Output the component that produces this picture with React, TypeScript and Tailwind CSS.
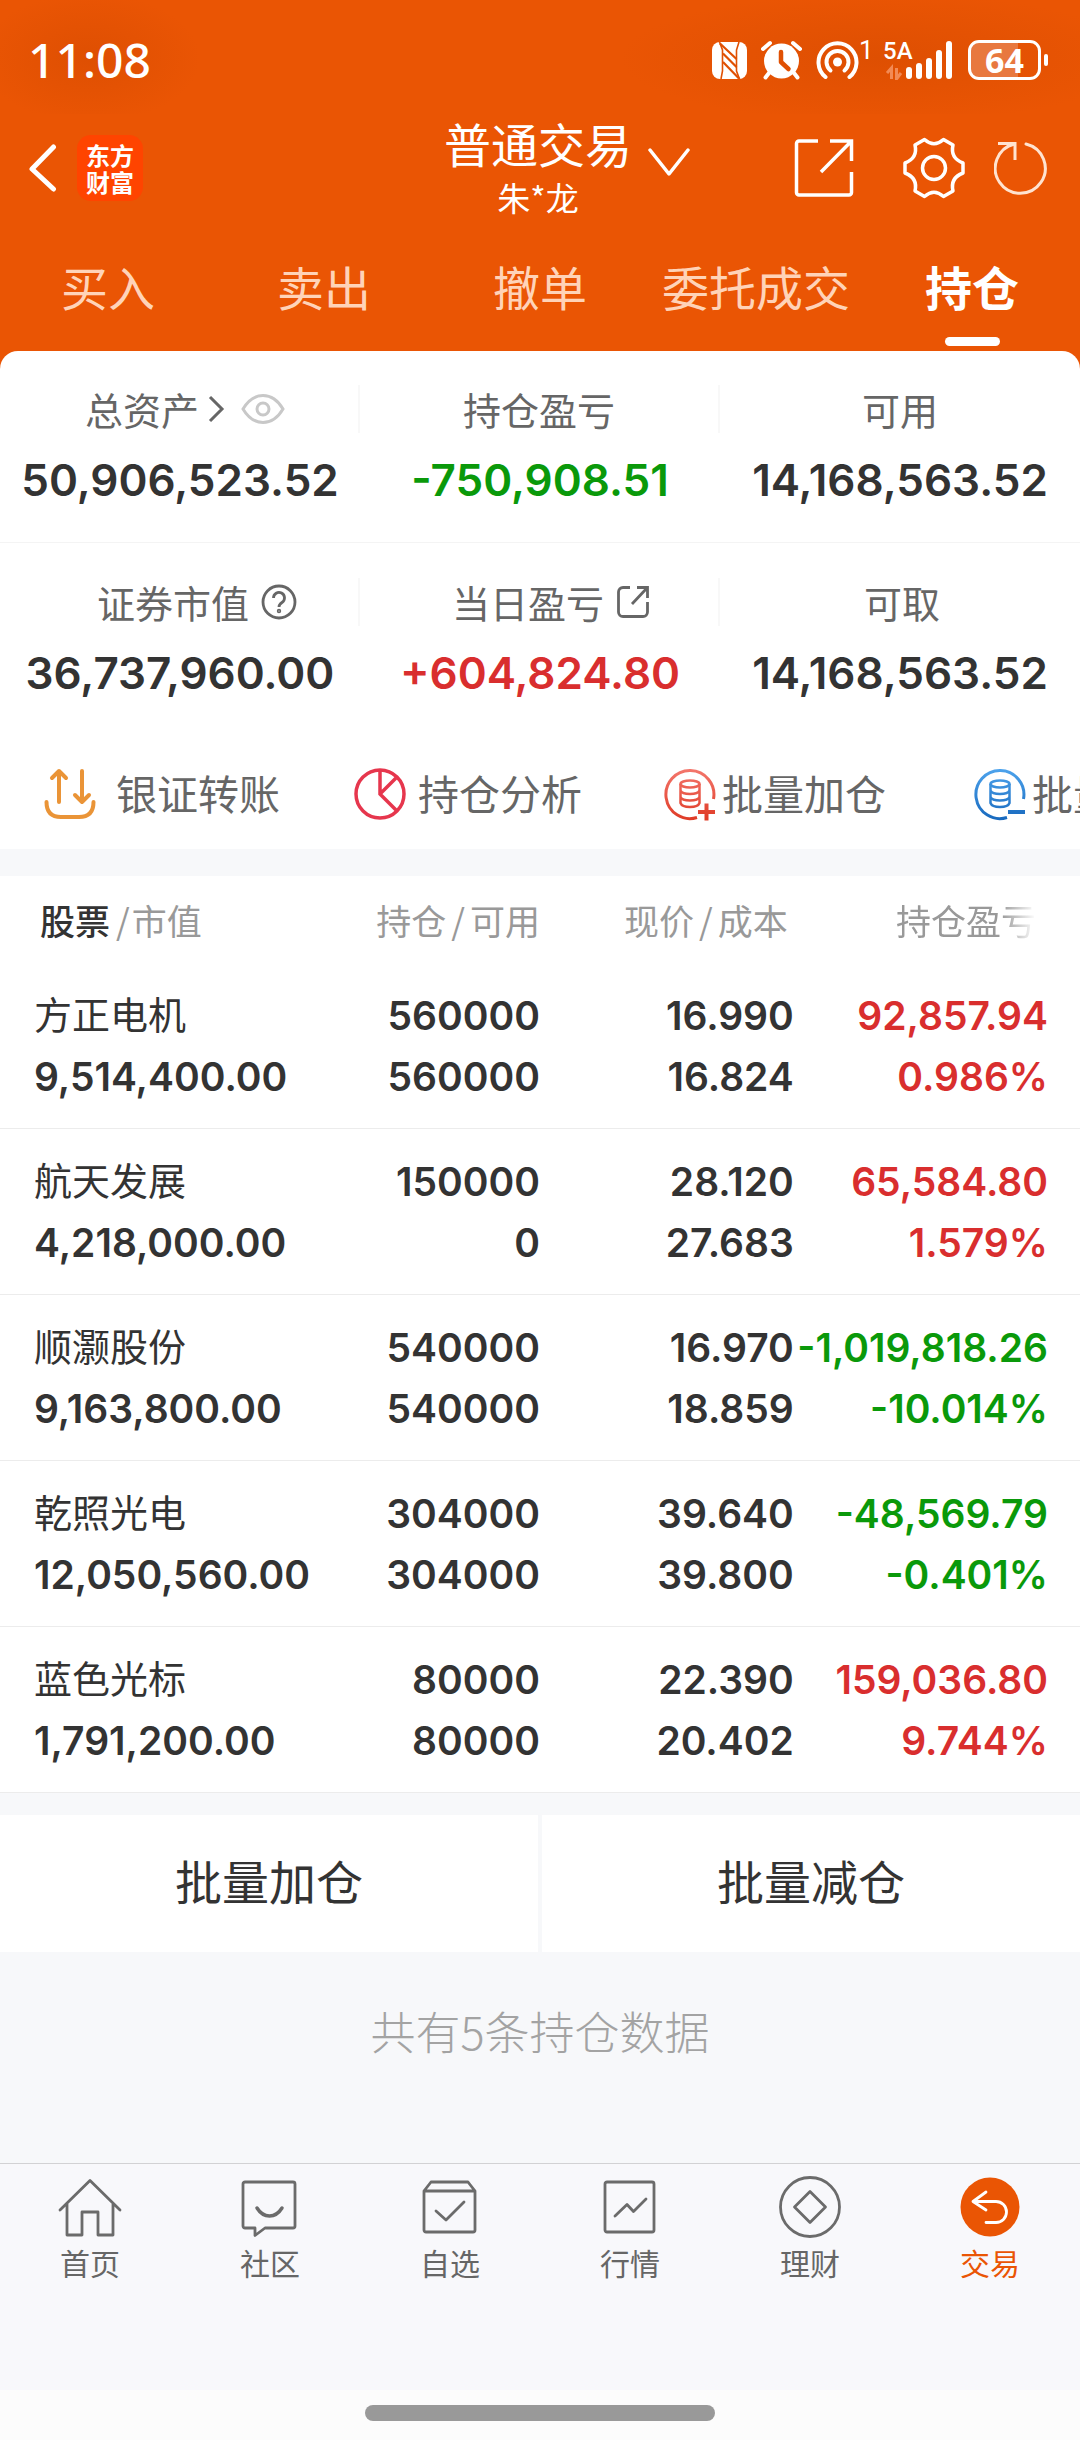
import type { ReactNode } from "react";

const RED = "text-[#d92e2e]";
const GREEN = "text-[#0a990a]";

function NfcIcon() {
  return (
    <svg width="35" height="37" viewBox="0 0 35 37" aria-hidden="true">
      <rect width="35" height="37" rx="8" fill="#fff" />
      <g fill="none" stroke="#e05003" strokeWidth="1.600">
        <path d="M7.500 0L10.500 8V29L9 37" />
        <path d="M27 0L24.500 8V29L27.500 37" />
        <path d="M8 1.500L24.500 17M11 11.500L24.500 25M11 20L27 36.500" strokeWidth="2.200" />
      </g>
    </svg>
  );
}

function AlarmIcon() {
  return (
    <svg width="41" height="40" viewBox="0 0 41 40" aria-hidden="true">
      <circle cx="20.500" cy="21" r="17.500" fill="#fff" />
      <path d="M2 9L9 3M39 9L32 3M8 33L4.500 37.500M33 33L36.500 37.500" stroke="#fff" strokeWidth="4" strokeLinecap="round" />
      <path d="M20 12V22L27.500 29" fill="none" stroke="#e05003" strokeWidth="4.500" strokeLinecap="round" strokeLinejoin="round" />
    </svg>
  );
}

function HotspotIcon() {
  return (
    <svg width="43" height="40" viewBox="0 0 43 40" aria-hidden="true">
      <circle cx="21.500" cy="22" r="4.500" fill="#fff" />
      <g fill="none" stroke="#fff" strokeWidth="4" strokeLinecap="round">
        <path d="M9.500 37A19 19 0 1 1 33.500 37" />
        <path d="M14.500 30.500A11 11 0 1 1 28.500 30.500" />
      </g>
    </svg>
  );
}

function SignalIcon() {
  return (
    <svg width="70" height="40" viewBox="0 0 70 40" aria-hidden="true">
      <path d="M2 33L6.500 28V39M11.500 28V39L16 33" fill="none" stroke="#f28a55" strokeWidth="3" />
      <g fill="#fff">
        <rect x="21" y="27" width="6" height="12" rx="3" />
        <rect x="31" y="23" width="6" height="16" rx="3" />
        <rect x="41" y="18" width="6" height="21" rx="3" />
        <rect x="51" y="10" width="6" height="29" rx="3" />
        <rect x="61" y="1" width="6" height="38" rx="3" />
      </g>
    </svg>
  );
}

function StatusBar() {
  return (
    <div className="flex h-[114px] items-start justify-between bg-[radial-gradient(ellipse_110px_65px_at_90px_58px,#de4f02,transparent),radial-gradient(ellipse_260px_65px_at_880px_58px,#de4f02,transparent)] pr-8 pl-[28px] pt-[35px] text-white">
      <span className="font-['Noto_Sans',sans-serif] text-[48px] leading-[50px] font-medium">11:08</span>
      <div className="flex h-[50px] items-center">
        <NfcIcon />
        <span className="ml-[14px]"><AlarmIcon /></span>
        <span className="ml-[14px]"><HotspotIcon /></span>
        <span className="mb-5 w-[26px] font-['Roboto',sans-serif] text-[26px] leading-[26px]">1</span>
        <span className="relative">
          <SignalIcon />
          <span className="absolute -top-[2px] -left-[2px] font-['Roboto',sans-serif] text-[24px] leading-[26px] font-medium">5A</span>
        </span>
        <span className="ml-[13px] flex h-10 w-[73px] items-center justify-center rounded-[11px] border-[3px] border-white bg-linear-to-r from-[#e8783f] from-70% to-transparent to-70% font-['Open_Sans',sans-serif] text-[34px] leading-[34px] font-bold">
          64
        </span>
        <span className="ml-[3px] h-3 w-[4px] rounded-full bg-white" />
      </div>
    </div>
  );
}

function TitleBar() {
  return (
    <div className="grid h-[108px] grid-cols-[1fr_auto_1fr] items-center pr-8 pl-7 text-white">
      <div className="flex items-center gap-5">
        <button type="button" aria-label="返回">
          <svg width="29" height="50" viewBox="0 0 29 50" fill="none" stroke="#fff" strokeWidth="5" strokeLinecap="round" strokeLinejoin="round">
            <path d="M25.500 4L4 26L25.500 46" />
          </svg>
        </button>
        <div className="flex h-[66px] w-[66px] items-center justify-center rounded-[14px] bg-[#ff4400]">
          <span className="w-[50px] text-center text-[24px] leading-[27px] font-bold break-all">东方财富</span>
        </div>
      </div>
      <button type="button" className="flex items-center gap-4 pl-[58px]">
        <span className="flex flex-col items-center">
          <span className="text-[47px] leading-[58px]">普通交易</span>
          <span className="text-[33px] leading-[50px]">朱*龙</span>
        </span>
        <svg className="mb-3" width="42" height="30" viewBox="0 0 42 30" fill="none" stroke="#fff" strokeWidth="3.500" strokeLinecap="round" strokeLinejoin="round">
          <path d="M2 3L21 27L40 3" />
        </svg>
      </button>
      <div className="flex items-center justify-end">
        <button type="button" aria-label="分享" className="mr-[49px]">
          <svg width="60" height="60" viewBox="0 0 60 60" fill="none" stroke="#fff" strokeWidth="3.500" strokeLinejoin="round">
            <path d="M24 3H5a2.500 2.500 0 0 0-2.500 2.500v49A2.500 2.500 0 0 0 5 57h50a2.500 2.500 0 0 0 2.500-2.500V34" />
            <path d="M36 3H57.500V23M57 3.500L27 34" strokeLinejoin="miter" />
          </svg>
        </button>
        <button type="button" aria-label="设置" className="mr-[29px]">
          <svg width="62" height="62" viewBox="0 0 62 62" fill="none" stroke="#fff" strokeWidth="3.500" strokeLinejoin="round">
            <path d="M40.500 2.500L50 8Q47 21 60 26V36Q47 41 50 54L40.500 59.500Q31 51 21.500 59.500L12 54Q15 41 2 36V26Q15 21 12 8L21.500 2.500Q31 11 40.500 2.500Z" />
            <circle cx="31" cy="31" r="11.500" />
          </svg>
        </button>
        <button type="button" aria-label="刷新">
          <svg width="54" height="56" viewBox="0 0 54 56" fill="none" stroke="#ffe3d0" strokeWidth="3">
            <path d="M32 4A25 25 0 1 1 20.500 4" strokeLinecap="round" />
            <path d="M4 3.500H21V20" />
          </svg>
        </button>
      </div>
    </div>
  );
}

const tabs = ["买入", "卖出", "撤单", "委托成交", "持仓"];

function Tabs() {
  return (
    <nav className="grid h-[129px] grid-cols-5 pt-8">
      {tabs.map((tab) => {
        const active = tab === "持仓";
        return (
          <button
            key={tab}
            type="button"
            className={`flex flex-col items-center justify-start text-[47px] leading-[64px] ${active ? "font-bold text-white" : "text-[#ffd3b8]"}`}
          >
            {tab}
            {active && <span className="mt-[19px] h-[9px] w-[55px] rounded-full bg-white" />}
          </button>
        );
      })}
    </nav>
  );
}

type StatProps = { label: string; value: string; tone?: string; divided?: boolean; shift?: string; icon?: ReactNode };

function Stat({ label, value, tone = "text-[#333]", divided = false, shift = "", icon }: StatProps) {
  return (
    <div className="flex flex-col items-center">
      <div className={`flex h-12 w-full items-center justify-center text-[38px] leading-[48px] text-[#666] ${shift} ${divided ? "border-r-2 border-[#f8f8f8]" : ""}`}>
        {label}
        {icon}
      </div>
      <div className={`mt-[18px] font-['Inter',sans-serif] text-[44px] leading-[58px] font-semibold whitespace-nowrap ${tone}`}>{value}</div>
    </div>
  );
}

function Summary() {
  return (
    <section>
      <div className="grid grid-cols-3 border-b border-[#f4f4f4] pt-[34px] pb-[33px]">
        <Stat
          label="总资产"
          value="50,906,523.52"
          divided
          shift="pl-3"
          icon={
            <>
              <svg className="ml-2" width="18" height="30" viewBox="0 0 18 30" fill="none" stroke="#666" strokeWidth="3">
                <path d="M3 3L15 15L3 27" />
              </svg>
              <svg className="ml-4" width="44" height="32" viewBox="0 0 44 32" fill="none" stroke="#c8c8c8" strokeWidth="3">
                <path d="M2 16Q10 2.500 22 2.500T42 16Q34 29.500 22 29.500T2 16Z" />
                <circle cx="22" cy="16" r="6" />
              </svg>
            </>
          }
        />
        <Stat label="持仓盈亏" value="-750,908.51" tone={GREEN} divided />
        <Stat label="可用" value="14,168,563.52" />
      </div>
      <div className="grid grid-cols-3 pt-[35px] pb-9">
        <Stat
          label="证券市值"
          value="36,737,960.00"
          divided
          shift="pl-9"
          icon={
            <svg className="ml-3" width="36" height="36" viewBox="0 0 36 36" fill="none" stroke="#666" strokeWidth="2.800">
              <circle cx="18" cy="18" r="16" />
              <path d="M12.500 14a5.500 5.500 0 1 1 8.500 4.500q-3 2-3 4.500" />
              <circle cx="18" cy="27" r="0.800" />
            </svg>
          }
        />
        <Stat
          label="当日盈亏"
          value="+604,824.80"
          tone={RED}
          divided
          shift="pl-6"
          icon={
            <svg className="ml-3" width="34" height="34" viewBox="0 0 34 34" fill="none" stroke="#666" strokeWidth="2.800">
              <path d="M14 2.500H7A4.500 4.500 0 0 0 2.500 7V27A4.500 4.500 0 0 0 7 31.500H27A4.500 4.500 0 0 0 31.500 27V17" />
              <path d="M21 2.500H31.500V13M31 3L16 19" />
            </svg>
          }
        />
        <Stat label="可取" value="14,168,563.52" shift="pl-1" />
      </div>
    </section>
  );
}

function CoinCircle({ top, bottom, id, minus = false }: { top: string; bottom: string; id: string; minus?: boolean }) {
  return (
    <svg width="52" height="54" viewBox="0 0 52 54" fill="none" stroke={`url(#${id})`} strokeWidth="3">
      <defs>
        <linearGradient id={id} gradientUnits="userSpaceOnUse" x1="0" y1="0" x2="0" y2="54">
          <stop stopColor={top} />
          <stop offset="1" stopColor={bottom} />
        </linearGradient>
      </defs>
      <path d="M33 50.500A24 24 0 1 1 49.500 32" />
      <ellipse cx="26" cy="17" rx="9.500" ry="3.500" strokeWidth="2.500" />
      <path d="M16.500 17V36Q18 40 26 40T35.500 36V17M16.500 23.500Q18 27 26 27T35.500 23.500M16.500 30Q18 33.500 26 33.500T35.500 30" strokeWidth="2.500" />
      <path d={minus ? "M34 45H51" : "M34 45H51M42.500 36.500V53.500"} strokeWidth="4" />
    </svg>
  );
}

function Action({ label, gap, children }: { label: string; gap: string; children: ReactNode }) {
  return (
    <button type="button" className={`flex w-[310px] shrink-0 items-center text-[41px] leading-[56px] whitespace-nowrap text-[#666] ${gap}`}>
      {children}
      <span className="mb-1">{label}</span>
    </button>
  );
}

function Actions() {
  return (
    <div className="flex h-[111px] items-center overflow-hidden pl-11">
      <Action label="银证转账" gap="gap-5">
        <svg width="52" height="54" viewBox="0 0 52 54" fill="none" stroke="#ea9437" strokeWidth="4" strokeLinecap="round" strokeLinejoin="round">
          <path d="M15 35V4M8 11L15 4L22 11M38 4V35M31 28L38 35L45 28" />
          <path d="M2.500 35Q2.500 50 17 50H35Q49.500 50 49.500 35" />
        </svg>
      </Action>
      <Action label="持仓分析" gap="gap-3">
        <svg width="52" height="54" viewBox="0 0 52 54" fill="none" stroke="#e6364d" strokeWidth="3.500">
          <circle cx="26" cy="27" r="24" />
          <path d="M26 3V27L43 44M26 27L42 11" />
        </svg>
      </Action>
      <Action label="批量加仓" gap="gap-[6px]">
        <CoinCircle id="coinRed" top="#f4796f" bottom="#df3a25" />
      </Action>
      <Action label="批量减仓" gap="gap-[6px]">
        <CoinCircle id="coinBlue" top="#4fa5ee" bottom="#1768bd" minus />
      </Action>
    </div>
  );
}

const holdings = [
  { name: "方正电机", value: "9,514,400.00", held: "560000", free: "560000", price: "16.990", cost: "16.824", pnl: "92,857.94", rate: "0.986%", tone: RED },
  { name: "航天发展", value: "4,218,000.00", held: "150000", free: "0", price: "28.120", cost: "27.683", pnl: "65,584.80", rate: "1.579%", tone: RED },
  { name: "顺灏股份", value: "9,163,800.00", held: "540000", free: "540000", price: "16.970", cost: "18.859", pnl: "-1,019,818.26", rate: "-10.014%", tone: GREEN },
  { name: "乾照光电", value: "12,050,560.00", held: "304000", free: "304000", price: "39.640", cost: "39.800", pnl: "-48,569.79", rate: "-0.401%", tone: GREEN },
  { name: "蓝色光标", value: "1,791,200.00", held: "80000", free: "80000", price: "22.390", cost: "20.402", pnl: "159,036.80", rate: "9.744%", tone: RED },
];

function Cell({ top, bottom }: { top: string; bottom: string }) {
  return (
    <td className="pt-[22px] pb-[21px] text-right">
      <div>{top}</div>
      <div>{bottom}</div>
    </td>
  );
}

function Holdings() {
  return (
    <table className="w-full table-fixed border-collapse bg-white whitespace-nowrap">
      <colgroup>
        <col className="w-[32%]" />
        <col className="w-[18%]" />
        <col className="w-[23.500%]" />
        <col className="w-[26.500%]" />
      </colgroup>
      <thead>
        <tr className="h-[87px] text-[35px] leading-[48px] text-[#999]">
          <th className="pl-10 text-left font-normal">
            <span className="mr-[6px] font-medium text-[#333]">股票</span>/<span className="ml-[2px]">市值</span>
          </th>
          <th className="text-right font-normal">持仓<span className="mx-[5px]">/</span>可用</th>
          <th className="pr-[6px] text-right font-normal">现价<span className="mx-[5px]">/</span>成本</th>
          <th className="pr-11 text-right font-normal">
            <span className="mask-r-from-75% mask-r-to-100%">持仓盈亏</span>
          </th>
        </tr>
      </thead>
      <tbody className="font-['Inter','Noto_Sans_CJK_SC',sans-serif] text-[39px] leading-[61px] font-semibold text-[#333]">
        {holdings.map((h) => (
          <tr key={h.name} className="border-b border-[#ececec]">
            <td className="pt-[22px] pb-[21px] pl-[34px]">
              <div className="h-[61px] text-[38px] font-normal">{h.name}</div>
              <div>{h.value}</div>
            </td>
            <Cell top={h.held} bottom={h.free} />
            <Cell top={h.price} bottom={h.cost} />
            <td className={`pt-[22px] pr-8 pb-[21px] text-right ${h.tone}`}>
              <div>{h.pnl}</div>
              <div>{h.rate}</div>
            </td>
          </tr>
        ))}
      </tbody>
    </table>
  );
}

const navIcons: { label: string; icon: ReactNode }[] = [
  {
    label: "首页",
    icon: <path d="M2 34L32 4.500L62 34M9 28V59H24V36H40V59H55V28" />,
  },
  {
    label: "社区",
    icon: (
      <>
        <path d="M7 6H55a2 2 0 0 1 2 2V50a2 2 0 0 1-2 2H27L17 59.500V52H7a2 2 0 0 1-2-2V8a2 2 0 0 1 2-2Z" />
        <path d="M19 32Q24 40 31.500 40T44 32" strokeWidth="3.500" />
      </>
    ),
  },
  {
    label: "自选",
    icon: (
      <>
        <path d="M6 15L13 6H50L57 15V54a2 2 0 0 1-2 2H8a2 2 0 0 1-2-2ZM6 15H57" />
        <path d="M18 35L28 44L46 26" />
      </>
    ),
  },
  {
    label: "行情",
    icon: (
      <>
        <rect x="7" y="6" width="49" height="50" rx="2" />
        <path d="M17 40L29 28.500L35.500 35.500L48 23" />
      </>
    ),
  },
  {
    label: "理财",
    icon: (
      <>
        <circle cx="32" cy="31" r="29.500" />
        <path d="M32 15.500L47.500 31L32 46.500L16.500 31Z" />
      </>
    ),
  },
  {
    label: "交易",
    icon: (
      <>
        <circle cx="32" cy="31" r="29.500" fill="#ea5504" stroke="none" />
        <path d="M28 16L15 25.500L28 34M15 25.500H38a10.500 10.500 0 0 1 0 21H28" stroke="#fff" />
      </>
    ),
  },
];

function BottomNav() {
  return (
    <nav className="grid h-[227px] grid-cols-6 items-start border-t border-[#d2d2d4] bg-[#f8f8fb] pt-3">
      {navIcons.map(({ label, icon }) => (
        <button
          key={label}
          type="button"
          className={`flex flex-col items-center text-[30px] leading-[44px] ${label === "交易" ? "text-[#ea5504]" : "text-[#666]"}`}
        >
          <svg width="64" height="64" viewBox="0 0 64 64" fill="none" stroke="#6b6b6b" strokeWidth="2.800" strokeLinecap="round" strokeLinejoin="round">
            {icon}
          </svg>
          <span>{label}</span>
        </button>
      ))}
    </nav>
  );
}

export default function App() {
  return (
    <div className="flex min-h-screen flex-col bg-[#f7f8fa] font-['Noto_Sans_CJK_SC',sans-serif]">
      <header className="bg-[#ea5504]">
        <StatusBar />
        <TitleBar />
        <Tabs />
      </header>
      <div className="bg-[#ea5504]">
        <div className="rounded-t-[18px] bg-white">
          <Summary />
          <Actions />
        </div>
      </div>
      <main className="mt-[27px]">
        <Holdings />
        <div className="mt-[22px] grid grid-cols-2 gap-1 text-[47px] leading-[60px] text-[#333]">
          <button type="button" className="bg-white pt-[35px] pb-[42px]">批量加仓</button>
          <button type="button" className="bg-white pt-[35px] pb-[42px]">批量减仓</button>
        </div>
        <p className="pt-[47px] text-center text-[45px] leading-[64px] font-light text-[#a3a3a3]">共有5条持仓数据</p>
      </main>
      <div className="mt-auto">
        <BottomNav />
        <div className="flex h-[50px] justify-center bg-[#fcfcfc] pt-[15px]">
          <span className="h-4 w-[350px] rounded-full bg-[#999]" />
        </div>
      </div>
    </div>
  );
}
